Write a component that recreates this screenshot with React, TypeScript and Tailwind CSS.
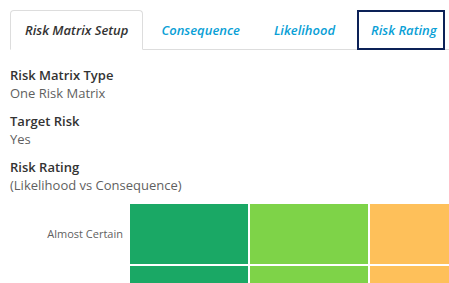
import React from "react";

const font = { fontFamily: '"Open Sans", "Noto Sans", sans-serif' };

function Field({ label, value }: { label: string; value: string }) {
  return (
    <div className="mb-[10px]">
      <div className="text-[13px] leading-[18px] font-semibold text-[#333333]">{label}</div>
      <div className="text-[13px] leading-[18px] text-[#5f5f5f]">{value}</div>
    </div>
  );
}

export default function App() {
  const rows = [
    { label: "Almost Certain", h: "h-[60px]" },
    { label: "", h: "h-[60px]" },
  ];
  const colors = ["bg-[#1aa865]", "bg-[#7ed348]", "bg-[#fec05a]"];
  return (
    <div className="w-[449px] h-[283px] overflow-hidden bg-white" style={font}>
      <div className="pl-[10px] pt-[10px]">
        <div className="flex items-end border-b border-[#dddddd] whitespace-nowrap">
          <div className="shrink-0 -mb-px px-[14px] py-[10px] border border-[#dddddd] border-b-white bg-white rounded-t-[4px] text-[13px] leading-[18px] font-semibold italic text-[#333333]">
            Risk Matrix Setup
          </div>
          <div className="shrink-0 ml-[2px] -mb-px px-[15px] py-[10px] border border-transparent text-[13px] leading-[18px] font-semibold italic text-[#0aa0d6]">
            Consequence
          </div>
          <div className="shrink-0 ml-[2px] -mb-px px-[15px] py-[10px] border border-transparent text-[13px] leading-[18px] font-semibold italic text-[#0aa0d6]">
            Likelihood
          </div>
          <div className="shrink-0 ml-[6px] -mb-px pl-[12px] pr-[6px] py-[9px] border-2 border-[#0c2157] text-[13px] leading-[18px] font-semibold italic text-[#0aa0d6]">
            Risk Rating
          </div>
        </div>
        <div className="pt-[16px]">
          <Field label="Risk Matrix Type" value="One Risk Matrix" />
          <Field label="Target Risk" value="Yes" />
          <Field label="Risk Rating" value="(Likelihood vs Consequence)" />
        </div>
        <div className="flex flex-col gap-[2px]">
          {rows.map((r, i) => (
            <div key={i} className="flex gap-[2px]">
              <div className={`w-[118px] shrink-0 pr-[5px] flex items-center justify-end whitespace-nowrap text-[11px] text-[#5f5f5f] ${r.h}`}>
                {r.label}
              </div>
              {colors.map((c, j) => (
                <div key={j} className={`w-[118px] shrink-0 ${r.h} ${c}`} />
              ))}
            </div>
          ))}
        </div>
      </div>
    </div>
  );
}
